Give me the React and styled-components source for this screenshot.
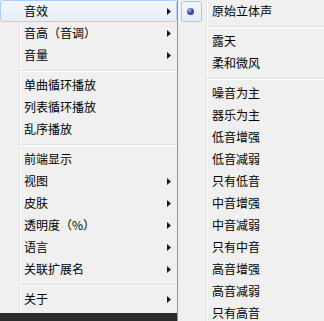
import React from "react";
import styled, { createGlobalStyle, css } from "styled-components";

const GlobalStyle = createGlobalStyle`
  html, body {
    margin: 0;
    padding: 0;
    background: #2b2b2b;
    overflow: hidden;
  }
  body {
    font-family: "Noto Sans CJK SC", "Microsoft YaHei", sans-serif;
    font-size: 12px;
    color: #000;
  }
`;

const Stage = styled.div`
  display: flex;
  align-items: flex-start;
  width: 324px;
  height: 321px;
  overflow: hidden;
`;

const Menu = styled.div`
  display: flex;
  flex-direction: column;
  box-sizing: border-box;
  width: ${(p) => p.$width};
  height: ${(p) => p.$height}px;
  flex: ${(p) => (p.$grow ? "1 0 auto" : "0 0 auto")};
  border-left: ${(p) => (p.$border ? "1px solid #979797" : "none")};
  background:
    linear-gradient(
      to right,
      transparent ${(p) => p.$gutter}px,
      #e2e3e3 ${(p) => p.$gutter}px,
      #e2e3e3 ${(p) => p.$gutter + 1}px,
      #ffffff ${(p) => p.$gutter + 1}px,
      #ffffff ${(p) => p.$gutter + 2}px,
      transparent ${(p) => p.$gutter + 2}px
    ),
    #f0f0f0;
`;

const Item = styled.div`
  display: flex;
  align-items: center;
  box-sizing: border-box;
  height: 22px;
  flex: 0 0 22px;
  border: 1px solid transparent;
  border-radius: 3px;
  padding-right: ${(p) => p.$padRight || 0}px;
  white-space: nowrap;
  ${(p) =>
    p.$active &&
    css`
      border-color: #aecff7;
      background: linear-gradient(to bottom, #f2f7fe 0%, #e5eefb 100%);
    `}
`;

const Gutter = styled.div`
  flex: 0 0 ${(p) => p.$width - 1}px;
  display: flex;
  align-items: center;
  height: 100%;
`;

const Label = styled.span`
  flex: 1;
  padding-left: ${(p) => p.$pad}px;
  line-height: 20px;
`;

const Arrow = styled.svg`
  flex: 0 0 4px;
  width: 4px;
  height: 7px;
`;

const Separator = styled.div`
  flex: 0 0 8px;
  box-sizing: border-box;
  margin-left: ${(p) => p.$indent}px;
  padding-top: 4px;
  &::before {
    content: "";
    display: block;
    height: 1px;
    background: #e0e0e0;
    border-bottom: 1px solid #ffffff;
  }
`;

const RadioBox = styled.div`
  box-sizing: border-box;
  margin-left: 2px;
  width: 21px;
  height: 21px;
  border: 1px solid #a9c9f2;
  border-radius: 3px;
  background: linear-gradient(to bottom, #f0f6fd, #e6eefa);
  display: flex;
  align-items: center;
  justify-content: center;
`;

const Bullet = styled.div`
  width: 7px;
  height: 7px;
  margin-left: -2px;
  margin-top: 1px;
  border-radius: 50%;
  background: radial-gradient(circle at 35% 30%, #a9b0e8 0%, #4a51b0 45%, #1c2170 100%);
`;

const SubArrow = () => (
  <Arrow viewBox="0 0 4 7">
    <polygon points="0,0 4,3.5 0,7" fill="#1a1a1a" />
  </Arrow>
);

const leftItems = [
  { t: "音效", sub: true, active: true },
  { t: "音高（音调）", sub: true },
  { t: "音量", sub: true },
  "sep",
  { t: "单曲循环播放" },
  { t: "列表循环播放" },
  { t: "乱序播放" },
  "sep",
  { t: "前端显示" },
  { t: "视图", sub: true },
  { t: "皮肤", sub: true },
  { t: "透明度（%）", sub: true },
  { t: "语言", sub: true },
  { t: "关联扩展名", sub: true },
  "sep",
  { t: "关于", sub: true },
];

const rightItems = [
  { t: "原始立体声", checked: true },
  "sep",
  { t: "露天" },
  { t: "柔和微风" },
  "sep",
  { t: "噪音为主" },
  { t: "器乐为主" },
  { t: "低音增强" },
  { t: "低音减弱" },
  { t: "只有低音" },
  { t: "中音增强" },
  { t: "中音减弱" },
  { t: "只有中音" },
  { t: "高音增强" },
  { t: "高音减弱" },
  { t: "只有高音" },
];

const LEFT_GUTTER = 19;
const RIGHT_GUTTER = 28;

export default function App() {
  return (
    <>
      <GlobalStyle />
      <Stage>
        <Menu $width="177px" $height={313} $gutter={LEFT_GUTTER}>
          {leftItems.map((it, i) =>
            it === "sep" ? (
              <Separator key={i} $indent={LEFT_GUTTER + 1} />
            ) : (
              <Item key={i} $active={it.active} $padRight={5}>
                <Gutter $width={LEFT_GUTTER} />
                <Label $pad={5}>{it.t}</Label>
                {it.sub && <SubArrow />}
              </Item>
            )
          )}
        </Menu>
        <Menu $grow $border $height={330} $gutter={RIGHT_GUTTER}>
          {rightItems.map((it, i) =>
            it === "sep" ? (
              <Separator key={i} $indent={RIGHT_GUTTER + 1} />
            ) : (
              <Item key={i}>
                <Gutter $width={RIGHT_GUTTER}>
                  {it.checked && (
                    <RadioBox>
                      <Bullet />
                    </RadioBox>
                  )}
                </Gutter>
                <Label $pad={6}>{it.t}</Label>
              </Item>
            )
          )}
        </Menu>
      </Stage>
    </>
  );
}
